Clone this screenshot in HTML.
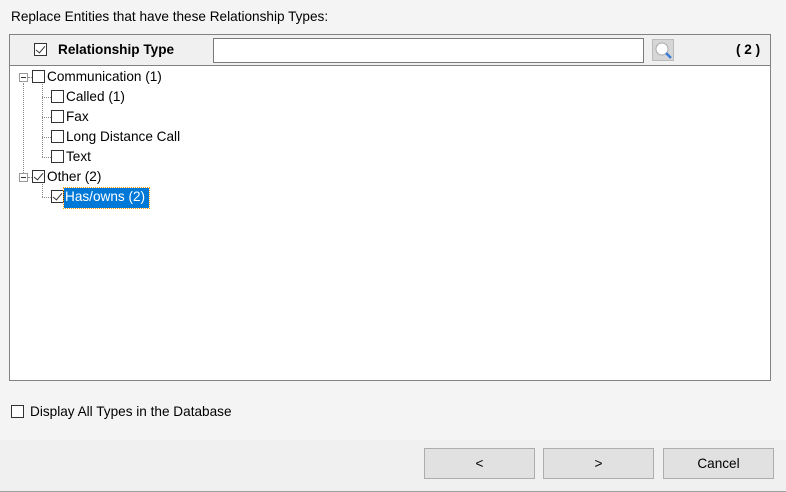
<!DOCTYPE html>
<html><head><style>
*{margin:0;padding:0;box-sizing:border-box}
body{width:786px;height:492px;background:#f4f4f4;font-family:"Liberation Sans",sans-serif;font-size:13.6px;color:#000;position:relative;overflow:hidden}
.a{position:absolute;white-space:nowrap}
.cb{position:absolute;width:13px;height:13px;border:1px solid #333;background:#fff}
.ck::after{content:"";position:absolute;left:3px;top:0px;width:4px;height:8px;border:solid #333;border-width:0 1.5px 1.5px 0;transform:rotate(40deg)}
.btn{position:absolute;top:448px;width:111px;height:31px;background:#e1e1e1;border:1px solid #adadad;text-align:center;line-height:30px}
.dv{position:absolute;border-left:1px dotted #888}
.dh{position:absolute;border-top:1px dotted #888}
.ex{position:absolute;width:9px;height:9px;border:1px solid #999;background:#fff}
.ex::after{content:"";position:absolute;left:1px;top:3px;width:5px;height:1px;background:#333}
</style></head><body>
<div class="a" style="left:11px;top:9px">Replace Entities that have these Relationship Types:</div>
<div class="a" style="left:9px;top:34px;width:762px;height:347px;border:1px solid #828282;background:#fff"></div>
<div class="a" style="left:10px;top:35px;width:760px;height:31px;background:#f0f0f0;border-bottom:1px solid #828282"></div>
<div class="cb ck" style="left:34px;top:43px"></div>
<div class="a" style="left:58px;top:42px;font-weight:bold">Relationship Type</div>
<div class="a" style="left:213px;top:38px;width:431px;height:25px;border:1px solid #7a7a7a;background:#fff"></div>
<div class="a" style="left:652px;top:39px;width:22px;height:22px;background:#d6d6d6;border:1px solid #bbb">
<svg width="20" height="20"><circle cx="9" cy="9" r="6" fill="#fff" stroke="#aaa"/><line x1="13" y1="13" x2="18" y2="18" stroke="#3a7bd5" stroke-width="2.5"/></svg></div>
<div class="a" style="left:736px;top:42px;font-weight:bold">( 2 )</div>

<div class="dv" style="left:23px;top:83px;height:92px"></div>
<div class="ex" style="left:19px;top:73px"></div>
<div class="dh" style="left:28px;top:77px;width:4px"></div>
<div class="cb" style="left:32px;top:70px"></div>
<div class="a" style="left:47px;top:69px">Communication (1)</div>
<div class="dv" style="left:42px;top:84px;height:73px"></div>
<div class="dh" style="left:42px;top:97px;width:9px"></div>
<div class="cb" style="left:51px;top:90px"></div><div class="a" style="left:66px;top:89px">Called (1)</div>
<div class="dh" style="left:42px;top:117px;width:9px"></div>
<div class="cb" style="left:51px;top:110px"></div><div class="a" style="left:66px;top:109px">Fax</div>
<div class="dh" style="left:42px;top:137px;width:9px"></div>
<div class="cb" style="left:51px;top:130px"></div><div class="a" style="left:66px;top:129px">Long Distance Call</div>
<div class="dh" style="left:42px;top:157px;width:9px"></div>
<div class="cb" style="left:51px;top:150px"></div><div class="a" style="left:66px;top:149px">Text</div>
<div class="ex" style="left:19px;top:173px"></div>
<div class="dh" style="left:28px;top:177px;width:4px"></div>
<div class="cb ck" style="left:32px;top:170px"></div>
<div class="a" style="left:47px;top:169px">Other (2)</div>
<div class="dv" style="left:42px;top:184px;height:13px"></div>
<div class="dh" style="left:42px;top:197px;width:9px"></div>
<div class="cb ck" style="left:51px;top:190px"></div>
<div class="a" style="left:64px;top:188px;height:20px;width:85px;background:#0078d7;color:#fff;outline:1px dotted #f90;padding:1px 0 0 1px">Has/owns (2)</div>

<div class="cb" style="left:11px;top:405px"></div>
<div class="a" style="left:30px;top:404px">Display All Types in the Database</div>
<div class="a" style="left:0;top:440px;width:786px;height:52px;background:#f0f0f0;border-bottom:1px solid #a0a0a0"></div>
<div class="btn" style="left:424px">&lt;</div>
<div class="btn" style="left:543px">&gt;</div>
<div class="btn" style="left:663px">Cancel</div>
</body></html>
